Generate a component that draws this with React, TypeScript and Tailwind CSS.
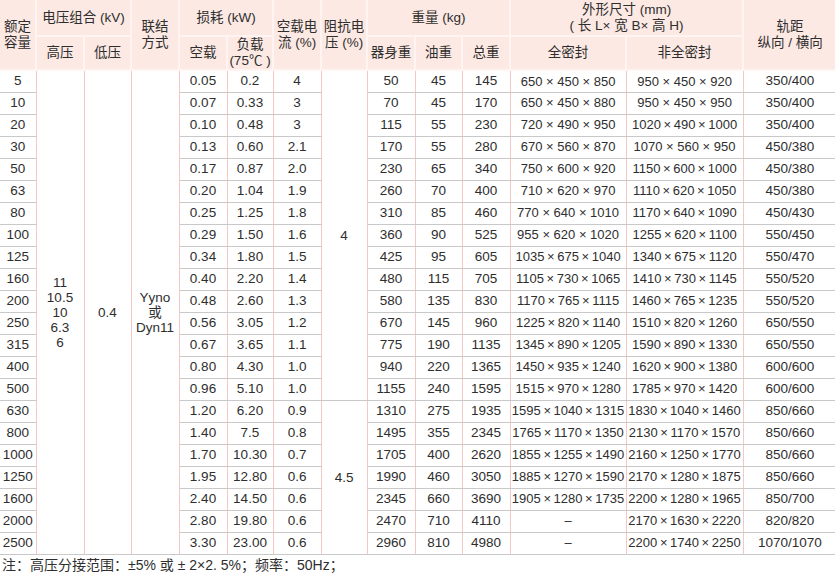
import React from "react";

type Row = [string, string, string, string, string, string, string, string, string, string];

const rows: Row[] = [
  ["5", "0.05", "0.2", "4", "50", "45", "145", "650×450×850", "950×450×920", "350/400"],
  ["10", "0.07", "0.33", "3", "70", "45", "170", "650×450×880", "950×450×950", "350/400"],
  ["20", "0.10", "0.48", "3", "115", "55", "230", "720×490×950", "1020×490×1000", "350/400"],
  ["30", "0.13", "0.60", "2.1", "170", "55", "280", "670×560×870", "1070×560×950", "450/380"],
  ["50", "0.17", "0.87", "2.0", "230", "65", "340", "750×600×920", "1150×600×1000", "450/380"],
  ["63", "0.20", "1.04", "1.9", "260", "70", "400", "710×620×970", "1110×620×1050", "450/380"],
  ["80", "0.25", "1.25", "1.8", "310", "85", "460", "770×640×1010", "1170×640×1090", "450/430"],
  ["100", "0.29", "1.50", "1.6", "360", "90", "525", "955×620×1020", "1255×620×1100", "550/450"],
  ["125", "0.34", "1.80", "1.5", "425", "95", "605", "1035×675×1040", "1340×675×1120", "550/470"],
  ["160", "0.40", "2.20", "1.4", "480", "115", "705", "1105×730×1065", "1410×730×1145", "550/520"],
  ["200", "0.48", "2.60", "1.3", "580", "135", "830", "1170×765×1115", "1460×765×1235", "550/520"],
  ["250", "0.56", "3.05", "1.2", "670", "145", "960", "1225×820×1140", "1510×820×1260", "650/550"],
  ["315", "0.67", "3.65", "1.1", "775", "190", "1135", "1345×890×1205", "1590×890×1330", "650/550"],
  ["400", "0.80", "4.30", "1.0", "940", "220", "1365", "1450×935×1240", "1620×900×1380", "600/600"],
  ["500", "0.96", "5.10", "1.0", "1155", "240", "1595", "1515×970×1280", "1785×970×1420", "600/600"],
  ["630", "1.20", "6.20", "0.9", "1310", "275", "1935", "1595×1040×1315", "1830×1040×1460", "850/660"],
  ["800", "1.40", "7.5", "0.8", "1495", "355", "2345", "1765×1170×1350", "2130×1170×1570", "850/660"],
  ["1000", "1.70", "10.30", "0.7", "1705", "400", "2620", "1855×1255×1490", "2160×1250×1770", "850/660"],
  ["1250", "1.95", "12.80", "0.6", "1990", "460", "3050", "1885×1270×1590", "2170×1280×1875", "850/660"],
  ["1600", "2.40", "14.50", "0.6", "2345", "660", "3690", "1905×1280×1735", "2200×1280×1965", "850/700"],
  ["2000", "2.80", "19.80", "0.6", "2470", "710", "4110", "–", "2170×1630×2220", "820/820"],
  ["2500", "3.30", "23.00", "0.6", "2960", "810", "4980", "–", "2200×1740×2250", "1070/1070"],
];

function dim(s: string) {
  if (s === "–") return s;
  const digits = s.replace(/×/g, "").length;
  const sep = digits >= 11 ? "\u2009×\u2009" : " × ";
  return s.split("×").join(sep);
}

const widths = [36, 48, 47, 48, 48, 46, 48, 46, 48, 47, 48, 116, 117, 93];

const td = "border-b border-r border-b-[#c9c9c9] border-r-[#f5c8c8] text-center align-middle p-0 whitespace-nowrap";
const tdDim = "border-b border-r border-b-[#c9c9c9] border-r-[#f5c8c8] text-center align-middle p-0 whitespace-nowrap text-[13px]";
const tdLast = "border-b border-b-[#c9c9c9] text-center align-middle p-0 whitespace-nowrap";
const span = "border-r border-r-[#f5c8c8] border-b border-b-[#c9c9c9] text-center align-middle p-0 leading-[15px]";
const th = "bg-[#fce9e3] border-r-2 border-b-2 border-[#fff4f1] font-normal text-center align-middle p-0 leading-[16px]";
const thLast = "bg-[#fce9e3] border-b-2 border-[#fff4f1] font-normal text-center align-middle p-0 leading-[16px]";

export default function App() {
  return (
    <div
      className="w-[835px] h-[576px] bg-white text-[#2e2e2e] text-[13.5px] overflow-hidden"
      style={{ fontFamily: '"Liberation Sans", "Noto Sans CJK SC", sans-serif' }}
    >
      <table className="w-[835px] table-fixed border-collapse">
        <colgroup>
          {widths.map((w, i) => (
            <col key={i} style={{ width: w }} />
          ))}
        </colgroup>
        <thead>
          <tr className="h-[36px]">
            <th rowSpan={2} className={th}>额定<br />容量</th>
            <th colSpan={2} className={th}>电压组合 (kV)</th>
            <th rowSpan={2} className={th}>联结<br />方式</th>
            <th colSpan={2} className={th}>损耗 (kW)</th>
            <th rowSpan={2} className={th}>空载电<br />流 (%)</th>
            <th rowSpan={2} className={th}>阻抗电<br />压 (%)</th>
            <th colSpan={3} className={th}>重量 (kg)</th>
            <th colSpan={2} className={th}>外形尺寸 (mm)<br />( 长 L× 宽 B× 高 H)</th>
            <th rowSpan={2} className={thLast}>轨距<br />纵向 / 横向</th>
          </tr>
          <tr className="h-[32px]">
            <th className={th}>高压</th>
            <th className={th}>低压</th>
            <th className={th}>空载</th>
            <th className={th}>负载<br />(75℃ )</th>
            <th className={th}>器身重</th>
            <th className={th}>油重</th>
            <th className={th}>总重</th>
            <th className={th}>全密封</th>
            <th className={th}>非全密封</th>
          </tr>
        </thead>
        <tbody>
          {rows.map((r, i) => (
            <tr key={r[0]} className="h-[22px]">
              <td className={td}>{r[0]}</td>
              {i === 0 && (
                <>
                  <td rowSpan={22} className={span}>11<br />10.5<br />10<br />6.3<br />6</td>
                  <td rowSpan={22} className={span}>0.4</td>
                  <td rowSpan={22} className={span}>Yyno<br />或<br />Dyn11</td>
                </>
              )}
              <td className={td}>{r[1]}</td>
              <td className={td}>{r[2]}</td>
              <td className={td}>{r[3]}</td>
              {i === 0 && <td rowSpan={15} className={span}>4</td>}
              {i === 15 && <td rowSpan={7} className={span}>4.5</td>}
              <td className={td}>{r[4]}</td>
              <td className={td}>{r[5]}</td>
              <td className={td}>{r[6]}</td>
              <td className={tdDim}>{dim(r[7])}</td>
              <td className={tdDim}>{dim(r[8])}</td>
              <td className={tdLast}>{r[9]}</td>
            </tr>
          ))}
        </tbody>
      </table>
      <div className="pl-[2px] leading-[20px] text-[14px]">注：高压分接范围：±5% 或 ± 2×2. 5%；频率：50Hz；</div>
    </div>
  );
}
